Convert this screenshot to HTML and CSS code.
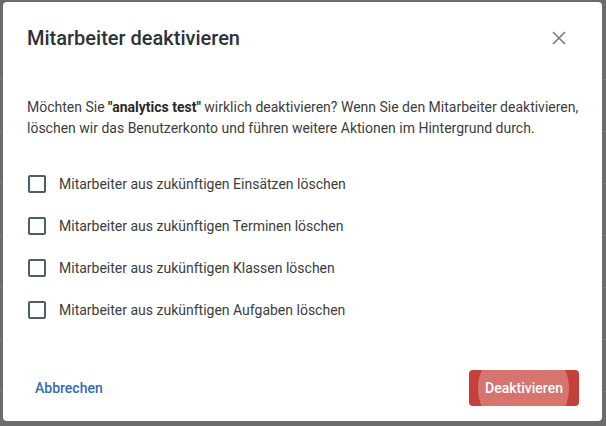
FILE: index.html
```html
<!DOCTYPE html>
<html lang="de">
<head>
<meta charset="utf-8">
<link rel="stylesheet" href="styles.css">
</head>
<body>
<div class="backdrop">
  <div class="bg-row"></div>
  <div class="bg-row"></div>
  <div class="bg-row"></div>
  <div class="bg-row"></div>
  <div class="bg-row"></div>
  <div class="bg-row"></div>
  <div class="bg-row"></div>
  <div class="bg-row"></div>
</div>
<div class="dialog" role="dialog">
  <div class="dialog-header">
    <h2 class="dialog-title">Mitarbeiter deaktivieren</h2>
    <button class="close-btn" aria-label="Schließen">
      <svg width="14" height="14" viewBox="0 0 14 14"><path d="M1 1L13 13M13 1L1 13" stroke="#7a7a7a" stroke-width="1.6" fill="none"/></svg>
    </button>
  </div>
  <p class="dialog-text">Möchten Sie <strong>"analytics test"</strong> wirklich deaktivieren? Wenn Sie den Mitarbeiter deaktivieren, löschen wir das Benutzerkonto und führen weitere Aktionen im Hintergrund durch.</p>
  <div class="options">
    <label class="option"><span class="box"></span><span class="label">Mitarbeiter aus zukünftigen Einsätzen löschen</span></label>
    <label class="option"><span class="box"></span><span class="label">Mitarbeiter aus zukünftigen Terminen löschen</span></label>
    <label class="option"><span class="box"></span><span class="label">Mitarbeiter aus zukünftigen Klassen löschen</span></label>
    <label class="option"><span class="box"></span><span class="label">Mitarbeiter aus zukünftigen Aufgaben löschen</span></label>
  </div>
  <div class="dialog-footer">
    <button class="btn-text">Abbrechen</button>
    <button class="btn-danger"><span class="ripple"></span><span class="btn-label">Deaktivieren</span></button>
  </div>
</div>
</body>
</html>
```
FILE: styles.css
```css
* { box-sizing: border-box; }
html, body { margin: 0; padding: 0; }
body {
  width: 606px;
  height: 426px;
  overflow: hidden;
  background: #6c6c6c;
  font-family: Roboto, "Liberation Sans", sans-serif;
  position: relative;
}
.backdrop {
  padding-top: 28px;
}
.bg-row {
  height: 52px;
  border-bottom: 1px solid #7a7a7a;
}
.dialog {
  position: absolute;
  left: 3px;
  top: 2px;
  width: 599px;
  height: 419px;
  background: #fff;
  border-radius: 4px;
  display: flex;
  flex-direction: column;
}
.dialog-header {
  display: flex;
  align-items: center;
  justify-content: space-between;
  padding: 24px 23px 0 24px;
  height: 48px;
}
.dialog-title {
  margin: 0;
  font-size: 20px;
  line-height: 24px;
  font-weight: 500;
  color: #2c3237;
}
.close-btn {
  width: 40px;
  height: 24px;
  border: 0;
  background: none;
  padding: 0;
  display: flex;
  align-items: center;
  justify-content: center;
  margin-top: -1px;
}
.dialog-text {
  margin: 47px 0 0 0;
  padding: 0 20px 0 24px;
  font-size: 14px;
  line-height: 21px;
  color: #3d3d3d;
}
.dialog-text strong {
  font-weight: 700;
  color: #2a2a2a;
}
.options {
  margin-top: 24px;
  padding-left: 25px;
  display: flex;
  flex-direction: column;
}
.option {
  height: 42px;
  display: flex;
  align-items: center;
  gap: 13px;
}
.box {
  width: 18px;
  height: 18px;
  border: 2px solid #4d5d69;
  border-radius: 2px;
  flex: none;
}
.label {
  font-size: 14px;
  color: #3d3d3d;
}
.dialog-footer {
  margin-top: 39px;
  display: flex;
  align-items: center;
  justify-content: space-between;
  padding: 0 23px 0 24px;
}
.btn-text {
  border: 0;
  background: none;
  font-family: inherit;
  font-size: 14px;
  font-weight: 500;
  color: #2f6bb8;
  padding: 0 8px;
  height: 36px;
}
.btn-danger {
  position: relative;
  overflow: hidden;
  width: 110px;
  height: 36px;
  border: 0;
  border-radius: 4px;
  background: #c6403b;
  font-family: inherit;
  font-size: 14px;
  font-weight: 500;
  color: #fff;
  padding: 0;
}
.ripple {
  position: absolute;
  left: 9px;
  top: -27px;
  width: 91px;
  height: 91px;
  border-radius: 50%;
  background: #d77470;
}
.btn-label {
  position: relative;
}
```
